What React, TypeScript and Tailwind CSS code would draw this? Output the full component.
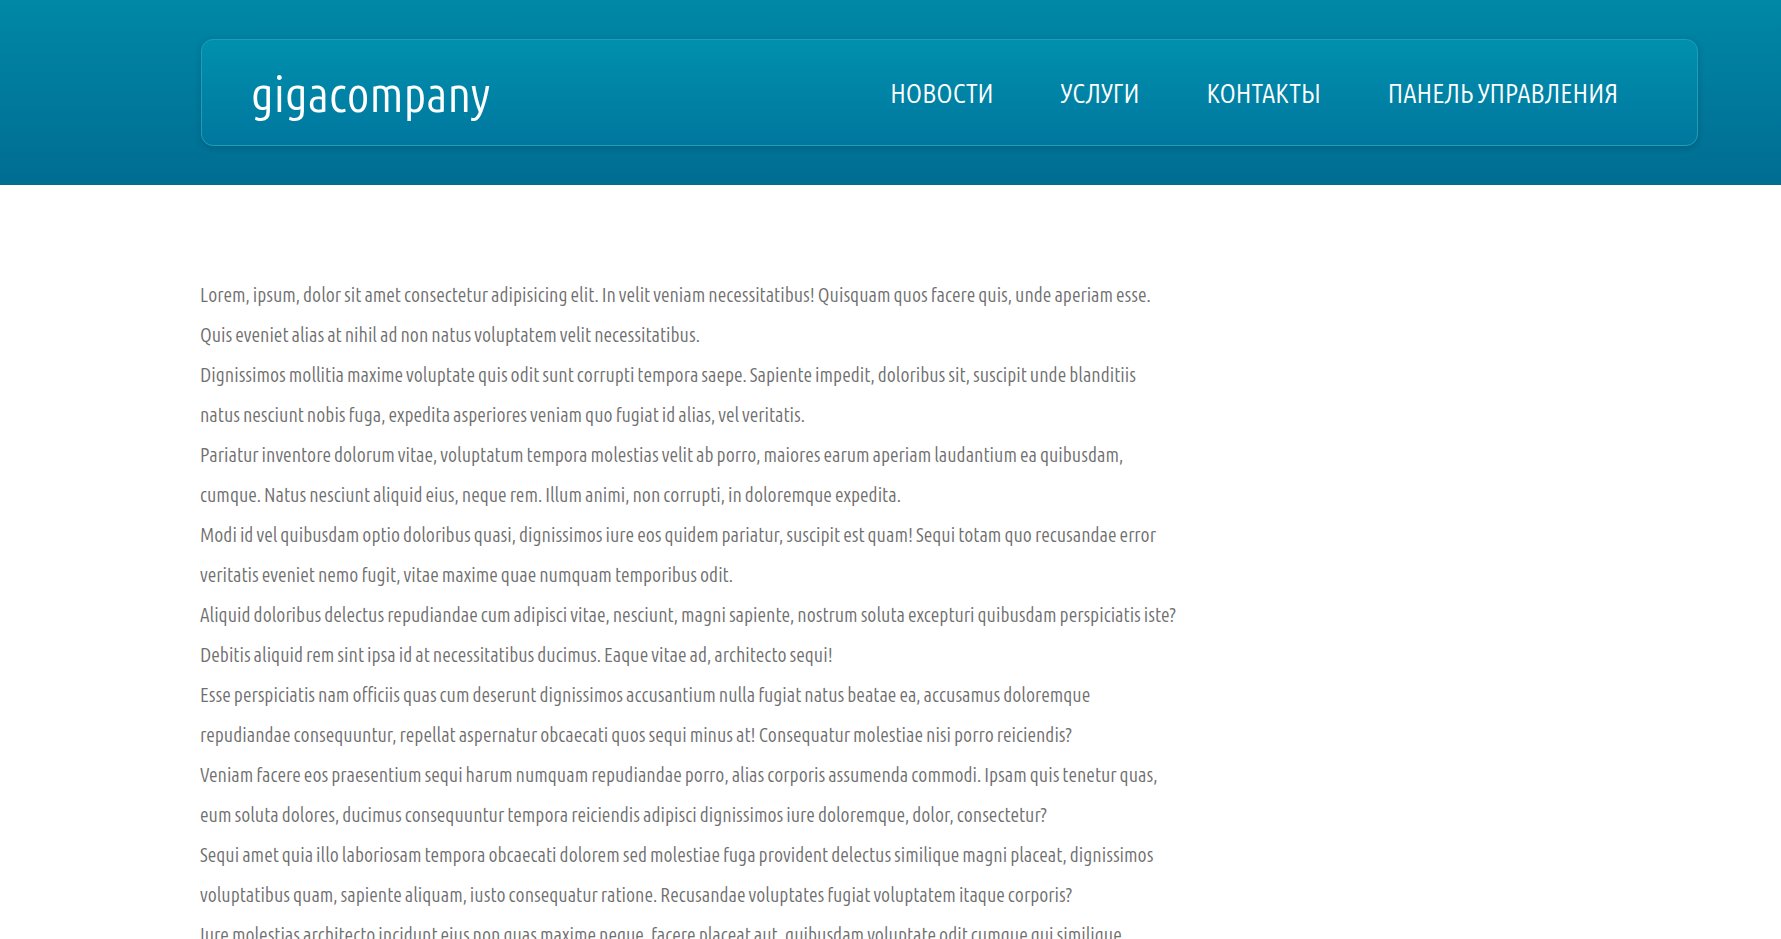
import React from "react";

const paragraphs: [string, string][] = [
  [
    "Lorem, ipsum, dolor sit amet consectetur adipisicing elit. In velit veniam necessitatibus! Quisquam quos facere quis, unde aperiam esse.",
    "Quis eveniet alias at nihil ad non natus voluptatem velit necessitatibus.",
  ],
  [
    "Dignissimos mollitia maxime voluptate quis odit sunt corrupti tempora saepe. Sapiente impedit, doloribus sit, suscipit unde blanditiis",
    "natus nesciunt nobis fuga, expedita asperiores veniam quo fugiat id alias, vel veritatis.",
  ],
  [
    "Pariatur inventore dolorum vitae, voluptatum tempora molestias velit ab porro, maiores earum aperiam laudantium ea quibusdam,",
    "cumque. Natus nesciunt aliquid eius, neque rem. Illum animi, non corrupti, in doloremque expedita.",
  ],
  [
    "Modi id vel quibusdam optio doloribus quasi, dignissimos iure eos quidem pariatur, suscipit est quam! Sequi totam quo recusandae error",
    "veritatis eveniet nemo fugit, vitae maxime quae numquam temporibus odit.",
  ],
  [
    "Aliquid doloribus delectus repudiandae cum adipisci vitae, nesciunt, magni sapiente, nostrum soluta excepturi quibusdam perspiciatis iste?",
    "Debitis aliquid rem sint ipsa id at necessitatibus ducimus. Eaque vitae ad, architecto sequi!",
  ],
  [
    "Esse perspiciatis nam officiis quas cum deserunt dignissimos accusantium nulla fugiat natus beatae ea, accusamus doloremque",
    "repudiandae consequuntur, repellat aspernatur obcaecati quos sequi minus at! Consequatur molestiae nisi porro reiciendis?",
  ],
  [
    "Veniam facere eos praesentium sequi harum numquam repudiandae porro, alias corporis assumenda commodi. Ipsam quis tenetur quas,",
    "eum soluta dolores, ducimus consequuntur tempora reiciendis adipisci dignissimos iure doloremque, dolor, consectetur?",
  ],
  [
    "Sequi amet quia illo laboriosam tempora obcaecati dolorem sed molestiae fuga provident delectus similique magni placeat, dignissimos",
    "voluptatibus quam, sapiente aliquam, iusto consequatur ratione. Recusandae voluptates fugiat voluptatem itaque corporis?",
  ],
  [
    "Iure molestias architecto incidunt eius non quas maxime neque, facere placeat aut, quibusdam voluptate odit cumque qui similique",
    "quaerat dolorum, ratione, eveniet aliquam laborum totam nostrum vero sed quos modi.",
  ],
];

const nav = ["НОВОСТИ", "УСЛУГИ", "КОНТАКТЫ", "ПАНЕЛЬ УПРАВЛЕНИЯ"];

export default function App() {
  return (
    <div className="min-h-screen bg-white font-['Ubuntu',sans-serif] [font-stretch:condensed]">
      <header className="h-[185px] bg-gradient-to-b from-[#0088a7] to-[#006d92] pl-[201px] pr-[83px] pt-[39px]">
        <div className="flex h-[107px] items-center justify-between rounded-[12px] border border-[#1e9dbd] bg-gradient-to-b from-[#0090ae] to-[#00779e] pl-[49px] pr-[79px] shadow-[0_2px_6px_rgba(0,40,60,0.25)]">
          <a className="text-[50px] leading-none text-white">gigacompany</a>
          <nav className="flex items-center gap-[67px]">
            {nav.map((n) => (
              <a key={n} className="text-[27.7px] leading-none text-white">
                {n}
              </a>
            ))}
          </nav>
        </div>
      </header>
      <main className="pl-[200px] pt-[90px] text-[19.9px] leading-[40px] text-[#6f6f6f]">
        {paragraphs.map(([a, b], i) => (
          <p key={i} className="whitespace-nowrap">
            {a}
            <br />
            {b}
          </p>
        ))}
      </main>
    </div>
  );
}
